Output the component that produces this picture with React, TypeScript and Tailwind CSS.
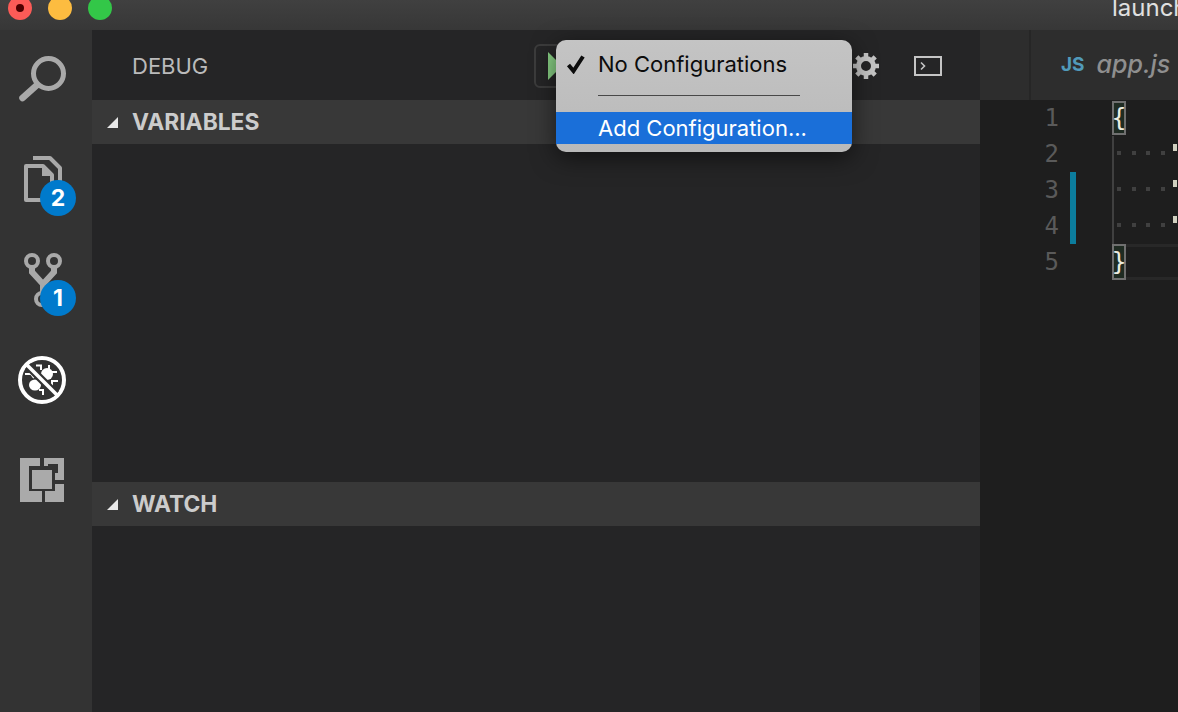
import React from "react";

const editorLines = [1, 2, 3, 4, 5];

function Badge({ n }: { n: number }) {
  return (
    <span className="absolute left-[40px] top-[50px] flex size-[36px] items-center justify-center rounded-full bg-[#007acc] text-[23px] font-bold leading-none text-white">
      {n}
    </span>
  );
}

function SearchIcon() {
  return (
    <svg width="92" height="100" viewBox="0 0 92 100" fill="none">
      <circle cx="48.5" cy="43.5" r="15" stroke="#a9a9a9" strokeWidth="5" />
      <path d="M37 55 L22.5 68" stroke="#a9a9a9" strokeWidth="6.5" strokeLinecap="round" />
    </svg>
  );
}

function FilesIcon() {
  return (
    <svg width="92" height="100" viewBox="0 0 92 100" fill="none">
      <path d="M33 28 H50 L60 38 V62" stroke="#a9a9a9" strokeWidth="4" strokeLinejoin="round" />
      <path d="M26 36 H43 L52 45 V70 H26 Z" stroke="#a9a9a9" strokeWidth="4" strokeLinejoin="round" />
      <path d="M42 35 V46 H54 Z" fill="#a9a9a9" />
    </svg>
  );
}

function GitIcon() {
  return (
    <svg width="92" height="100" viewBox="0 0 92 100" fill="none">
      <circle cx="32" cy="31" r="6" stroke="#a9a9a9" strokeWidth="4" />
      <circle cx="54" cy="31" r="6" stroke="#a9a9a9" strokeWidth="4" />
      <circle cx="42" cy="69" r="6" stroke="#a9a9a9" strokeWidth="4" />
      <path d="M32 37 V42 L43 54 L54 42 V37 M43 54 V63" stroke="#a9a9a9" strokeWidth="6" />
    </svg>
  );
}

function DebugIcon() {
  return (
    <svg width="92" height="100" viewBox="0 0 92 100" fill="none">
      <circle cx="42" cy="50" r="22" stroke="#ffffff" strokeWidth="4" />
      <circle cx="47" cy="44" r="6" fill="#ffffff" />
      <ellipse cx="35" cy="55" rx="6" ry="5.5" fill="#ffffff" />
      <path
        d="M36 35.5 H41 V40 M49 35 V40 M57 42 H51 V46 M58 51 H52 V56 M43 65 V60 H39 M25 44 H31 L34 48"
        stroke="#ffffff"
        strokeWidth="2"
      />
      <path d="M28 36 L56 64" stroke="#333333" strokeWidth="8" />
      <path d="M27 35 L57 65" stroke="#ffffff" strokeWidth="3.5" />
    </svg>
  );
}

function ExtensionsIcon() {
  return (
    <svg width="92" height="100" viewBox="0 0 92 100" fill="none">
      <rect x="20" y="28" width="44" height="44" fill="#aaaaaa" />
      <path d="M40 28 H44 V36 H40 Z M55 50 H64 V54 H55 Z M42 61 H45 V72 H42 Z" fill="#333333" />
      <rect x="29" y="36" width="26" height="25" fill="#333333" />
      <rect x="48" y="34" width="10" height="9" fill="#333333" />
      <rect x="32" y="40" width="20" height="19" fill="#aaaaaa" />
    </svg>
  );
}

function PlayIcon() {
  return (
    <svg width="14" height="28" viewBox="0 0 14 28">
      <path d="M0 0 L14 14 L0 28 Z" fill="#89d185" />
    </svg>
  );
}

function GearIcon() {
  return (
    <svg width="28" height="28" viewBox="0 0 28 28" fill="none">
      <circle cx="14" cy="14" r="7.5" stroke="#c5c5c5" strokeWidth="5" />
      <path
        d="M14 1 V6 M14 22 V27 M1 14 H6 M22 14 H27 M4.8 4.8 L8.3 8.3 M19.7 19.7 L23.2 23.2 M23.2 4.8 L19.7 8.3 M8.3 19.7 L4.8 23.2"
        stroke="#c5c5c5"
        strokeWidth="4.5"
      />
    </svg>
  );
}

function TerminalIcon() {
  return (
    <svg width="28" height="20" viewBox="0 0 28 20" fill="none">
      <rect x="1" y="1" width="26" height="18" stroke="#c5c5c5" strokeWidth="2" />
      <path d="M7 6.5 L10.5 10 L7 13.5" stroke="#c5c5c5" strokeWidth="1.6" />
    </svg>
  );
}

function Triangle() {
  return (
    <svg width="11" height="11" viewBox="0 0 11 11" className="ml-[15px] mr-[14px]">
      <path d="M11 0 V11 H0 Z" fill="#e8e8e8" />
    </svg>
  );
}

function SectionHeader({ title }: { title: string }) {
  return (
    <div className="flex h-[44px] items-center bg-[#383838] text-[22.8px] font-bold text-[#cccccc]">
      <Triangle />
      {title}
    </div>
  );
}

function Dots() {
  return (
    <div className="flex h-[36px] items-center pl-[3px]">
      <div className="mb-[2px] flex gap-[10.5px]">
        <span className="size-[4px] bg-[#404040]" />
        <span className="size-[4px] bg-[#404040]" />
        <span className="size-[4px] bg-[#404040]" />
        <span className="size-[4px] bg-[#404040]" />
      </div>
      <span className="ml-[8px] mt-[-14px] h-[7px] w-[4px] bg-[#d0d0c0]" />
    </div>
  );
}

export default function App() {
  return (
    <div className="flex h-[712px] w-[1178px] flex-col overflow-hidden bg-[#1e1e1e] font-['Inter',sans-serif]">
      {/* title bar */}
      <div className="flex h-[30px] shrink-0 items-start bg-gradient-to-b from-[#404040] to-[#373737]">
        <div className="mt-[-4px] flex gap-[16px] pl-[8px]">
          <span className="flex size-[24px] items-center justify-center rounded-full bg-[#fc5b57]">
            <span className="size-[8px] rounded-full bg-[#4d0000]" />
          </span>
          <span className="size-[24px] rounded-full bg-[#fdbc40]" />
          <span className="size-[24px] rounded-full bg-[#33c748]" />
        </div>
        <span className="ml-[1000px] mt-[-7px] whitespace-nowrap text-[24px] leading-[30px] text-[#e0e0e0]">launch.json</span>
      </div>

      <div className="flex min-h-0 flex-1">
        {/* activity bar */}
        <div className="flex w-[92px] shrink-0 flex-col bg-[#333333]">
          <div className="h-[100px]"><SearchIcon /></div>
          <div className="relative h-[100px]">
            <FilesIcon />
            <Badge n={2} />
          </div>
          <div className="relative h-[100px]">
            <GitIcon />
            <Badge n={1} />
          </div>
          <div className="h-[100px]"><DebugIcon /></div>
          <div className="h-[100px]"><ExtensionsIcon /></div>
        </div>

        {/* debug sidebar */}
        <div className="relative flex w-[888px] shrink-0 flex-col bg-[#252526]">
          <div className="flex h-[70px] shrink-0 items-center pl-[40px] pt-[2px] text-[22px] text-[#bbbbbb]">
            <span className="w-[76px]">DEBUG</span>
            <div className="ml-[326px] flex h-[44px] w-[60px] items-center rounded-[6px] border-2 border-[#3c3c3c] pl-[12px]">
              <PlayIcon />
            </div>
            <div className="ml-[258px]"><GearIcon /></div>
            <div className="ml-[34px]"><TerminalIcon /></div>
          </div>
          <SectionHeader title="VARIABLES" />
          <div className="h-[338px] shrink-0" />
          <SectionHeader title="WATCH" />

          {/* configuration menu */}
          <div className="absolute left-[464px] top-[10px] w-[296px] rounded-[10px] bg-gradient-to-b from-[#c4c4c4] to-[#b9b9b9] pt-[8px] pb-[8px] text-[22px] leading-[32px] text-[#0c0c0c] shadow-[0_6px_24px_rgba(0,0,0,0.55)]">
            <div className="flex items-center">
              <svg width="20" height="20" viewBox="0 0 20 20" className="ml-[10px] mr-[12px]">
                <path d="M2.5 11 L7.5 17 L17 2.5" stroke="#0c0c0c" strokeWidth="4" fill="none" />
              </svg>
              No Configurations
            </div>
            <div className="ml-[42px] mt-[15px] mb-[16px] h-[1px] w-[202px] bg-[#484848]" />
            <div className="bg-[#1a6fd9] pl-[42px] text-white">Add Configuration...</div>
          </div>
        </div>

        {/* editor */}
        <div className="flex min-w-0 flex-1 flex-col">
          <div className="flex h-[70px] shrink-0 bg-[#2d2d2d]">
            <div className="w-[51px] border-r-2 border-[#262626]" />
            <div className="flex items-center pl-[30px]">
              <span className="text-[19px] font-bold text-[#519aba]">JS</span>
              <span className="ml-[12px] whitespace-nowrap text-[25px] font-medium italic text-[#8f8f8f]">app.js</span>
            </div>
          </div>
          <div className="flex flex-1 font-['DejaVu_Sans_Mono',monospace]">
            <div className="w-[79px] shrink-0 text-right text-[24px] leading-[36px] text-[#5a5a5a]">
              {editorLines.map((n) => (
                <div key={n} className="h-[36px]">{n}</div>
              ))}
            </div>
            <div className="ml-[11px] mt-[72px] h-[72px] w-[6px] shrink-0 bg-[#0c7d9d]" />
            <div className="ml-[36px] flex-1">
              <div className="flex h-[36px] items-center">
                <span className="flex h-[34px] w-[14px] items-center justify-center border-2 border-[#707070] bg-[#1f2b22] text-[25px] text-[#ecece0]">{"{"}</span>
              </div>
              <div className="border-l-2 border-[#404040]">
                <Dots />
                <Dots />
                <Dots />
              </div>
              <div className="relative flex h-[36px] items-center border-y-[3px] border-[#282828]">
                <span className="flex h-[36px] w-[14px] shrink-0 items-center justify-center border-2 border-[#707070] bg-[#1f2b22] text-[25px] text-[#ecece0]">{"}"}</span>
              </div>
            </div>
          </div>
        </div>
      </div>
    </div>
  );
}
